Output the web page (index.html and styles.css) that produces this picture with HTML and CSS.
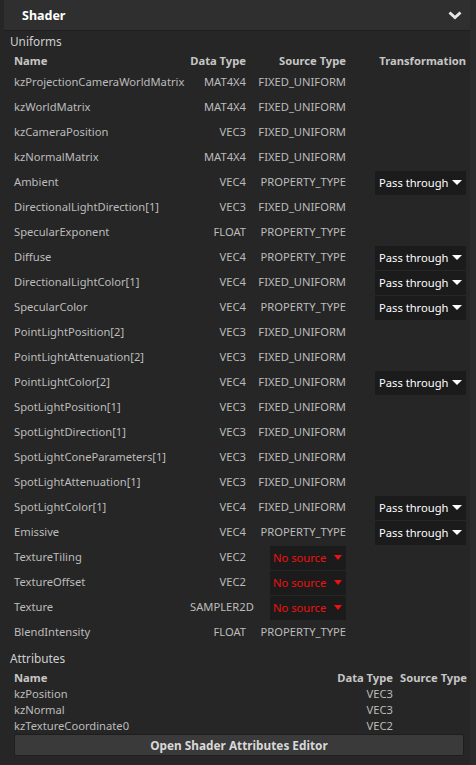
FILE: index.html
```html
<!DOCTYPE html>
<html>
<head>
<meta charset="utf-8">
<link rel="stylesheet" href="styles.css">
</head>
<body>
<div class="panel">
  <div class="header">
    <span class="title">Shader</span>
    <svg class="chev" width="14" height="9" viewBox="0 0 14 9"><path d="M1.5 1.5 L7 6.5 L12.5 1.5" fill="none" stroke="#e6e6e6" stroke-width="3"/></svg>
  </div>
  <div class="section-label">Uniforms</div>
  <div class="ugrid">
    <div class="hd">Name</div><div class="hd r">Data Type</div><div class="hd r">Source Type</div><div class="hd r">Transformation</div>
  </div>
  <div class="ugrid rows">
    <div>kzProjectionCameraWorldMatrix</div><div class="r">MAT4X4</div><div class="r">FIXED_UNIFORM</div><div></div>
    <div>kzWorldMatrix</div><div class="r">MAT4X4</div><div class="r">FIXED_UNIFORM</div><div></div>
    <div>kzCameraPosition</div><div class="r">VEC3</div><div class="r">FIXED_UNIFORM</div><div></div>
    <div>kzNormalMatrix</div><div class="r">MAT4X4</div><div class="r">FIXED_UNIFORM</div><div></div>
    <div>Ambient</div><div class="r">VEC4</div><div class="r">PROPERTY_TYPE</div><div class="r"><span class="dd">Pass through<i class="tri"></i></span></div>
    <div>DirectionalLightDirection[1]</div><div class="r">VEC3</div><div class="r">FIXED_UNIFORM</div><div></div>
    <div>SpecularExponent</div><div class="r">FLOAT</div><div class="r">PROPERTY_TYPE</div><div></div>
    <div>Diffuse</div><div class="r">VEC4</div><div class="r">PROPERTY_TYPE</div><div class="r"><span class="dd">Pass through<i class="tri"></i></span></div>
    <div>DirectionalLightColor[1]</div><div class="r">VEC4</div><div class="r">FIXED_UNIFORM</div><div class="r"><span class="dd">Pass through<i class="tri"></i></span></div>
    <div>SpecularColor</div><div class="r">VEC4</div><div class="r">PROPERTY_TYPE</div><div class="r"><span class="dd">Pass through<i class="tri"></i></span></div>
    <div>PointLightPosition[2]</div><div class="r">VEC3</div><div class="r">FIXED_UNIFORM</div><div></div>
    <div>PointLightAttenuation[2]</div><div class="r">VEC3</div><div class="r">FIXED_UNIFORM</div><div></div>
    <div>PointLightColor[2]</div><div class="r">VEC4</div><div class="r">FIXED_UNIFORM</div><div class="r"><span class="dd">Pass through<i class="tri"></i></span></div>
    <div>SpotLightPosition[1]</div><div class="r">VEC3</div><div class="r">FIXED_UNIFORM</div><div></div>
    <div>SpotLightDirection[1]</div><div class="r">VEC3</div><div class="r">FIXED_UNIFORM</div><div></div>
    <div>SpotLightConeParameters[1]</div><div class="r">VEC3</div><div class="r">FIXED_UNIFORM</div><div></div>
    <div>SpotLightAttenuation[1]</div><div class="r">VEC3</div><div class="r">FIXED_UNIFORM</div><div></div>
    <div>SpotLightColor[1]</div><div class="r">VEC4</div><div class="r">FIXED_UNIFORM</div><div class="r"><span class="dd">Pass through<i class="tri"></i></span></div>
    <div>Emissive</div><div class="r">VEC4</div><div class="r">PROPERTY_TYPE</div><div class="r"><span class="dd">Pass through<i class="tri"></i></span></div>
    <div>TextureTiling</div><div class="r">VEC2</div><div class="r"><span class="dd err">No source<i class="tri"></i></span></div><div></div>
    <div>TextureOffset</div><div class="r">VEC2</div><div class="r"><span class="dd err">No source<i class="tri"></i></span></div><div></div>
    <div>Texture</div><div class="r">SAMPLER2D</div><div class="r"><span class="dd err">No source<i class="tri"></i></span></div><div></div>
    <div>BlendIntensity</div><div class="r">FLOAT</div><div class="r">PROPERTY_TYPE</div><div></div>
  </div>
  <div class="section-label attr-label">Attributes</div>
  <div class="agrid">
    <div class="hd">Name</div><div class="hd r">Data Type</div><div class="hd r">Source Type</div>
    <div>kzPosition</div><div class="r">VEC3</div><div></div>
    <div>kzNormal</div><div class="r">VEC3</div><div></div>
    <div>kzTextureCoordinate0</div><div class="r">VEC2</div><div></div>
  </div>
  <div class="btn-wrap"><button class="btn">Open Shader Attributes Editor</button></div>
</div>
</body>
</html>
```

FILE: styles.css
```css
html, body {
  margin: 0;
  padding: 0;
  background: #262626;
}
body {
  font-family: "Noto Sans", "Open Sans", sans-serif;
  font-size: 11.2px;
  color: #bcbcbc;
  width: 476px;
  height: 765px;
  overflow: hidden;
}
.panel {
  width: 470px;
  height: 765px;
  background: #262626;
  border-right: 6px solid #2b2b2b;
}
.header {
  margin-left: 4px;
  height: 30px;
  background: #2f2f2f;
  border-bottom: 1px solid #1f1f1f;
  display: flex;
  align-items: center;
  justify-content: space-between;
  padding: 0 8px 0 18px;
}
.title {
  color: #ffffff;
  font-weight: bold;
  font-size: 12.5px;
}
.chev { display: block; }
.section-label {
  padding-left: 10px;
  height: 20px;
  line-height: 20px;
  color: #cfcfcf;
  font-size: 11.8px;
}
.ugrid {
  display: grid;
  grid-template-columns: 176px 56px 100px 120px;
  padding-left: 14px;
  align-items: center;
}
.ugrid > div { white-space: nowrap; }
.ugrid .hd {
  height: 18px;
  line-height: 19px;
}
.hd {
  font-weight: bold;
  color: #c6c6c6;
}
.r { text-align: right; }
.rows > div {
  height: 25px;
  line-height: 25px;
}
.dd {
  display: inline-flex;
  align-items: center;
  justify-content: space-between;
  box-sizing: border-box;
  width: 91px;
  height: 24px;
  line-height: 24px;
  vertical-align: middle;
  background: #1b1b1b;
  color: #ffffff;
  padding: 0 4px 0 4px;
  text-align: left;
  margin-top: -1px;
  font-size: 11.2px;
}
.dd.err {
  width: 76px;
  color: #ee1111;
  padding: 0 2px 0 3px;
}
.tri {
  display: inline-block;
  width: 0;
  height: 0;
  border-left: 5px solid transparent;
  border-right: 5px solid transparent;
  border-top: 5px solid #ffffff;
}
.err .tri {
  border-left-width: 4px;
  border-right-width: 4px;
  border-top-color: #ee1111;
  margin-right: 2px;
}
.attr-label {
  margin-top: 4px;
}
.agrid {
  display: grid;
  grid-template-columns: 322px 57px 74px;
  padding-left: 14px;
  margin-top: 2px;
}
.agrid > div {
  height: 16px;
  line-height: 16px;
  white-space: nowrap;
}
.btn-wrap {
  padding: 0 6px 0 14px;
}
.btn {
  display: block;
  width: 450px;
  height: 22px;
  background: #3a3a3a;
  border: 1px solid #1e1e1e;
  border-radius: 2px;
  color: #d8d8d8;
  font-family: inherit;
  font-size: 11.8px;
  font-weight: bold;
  padding: 0;
}
```
